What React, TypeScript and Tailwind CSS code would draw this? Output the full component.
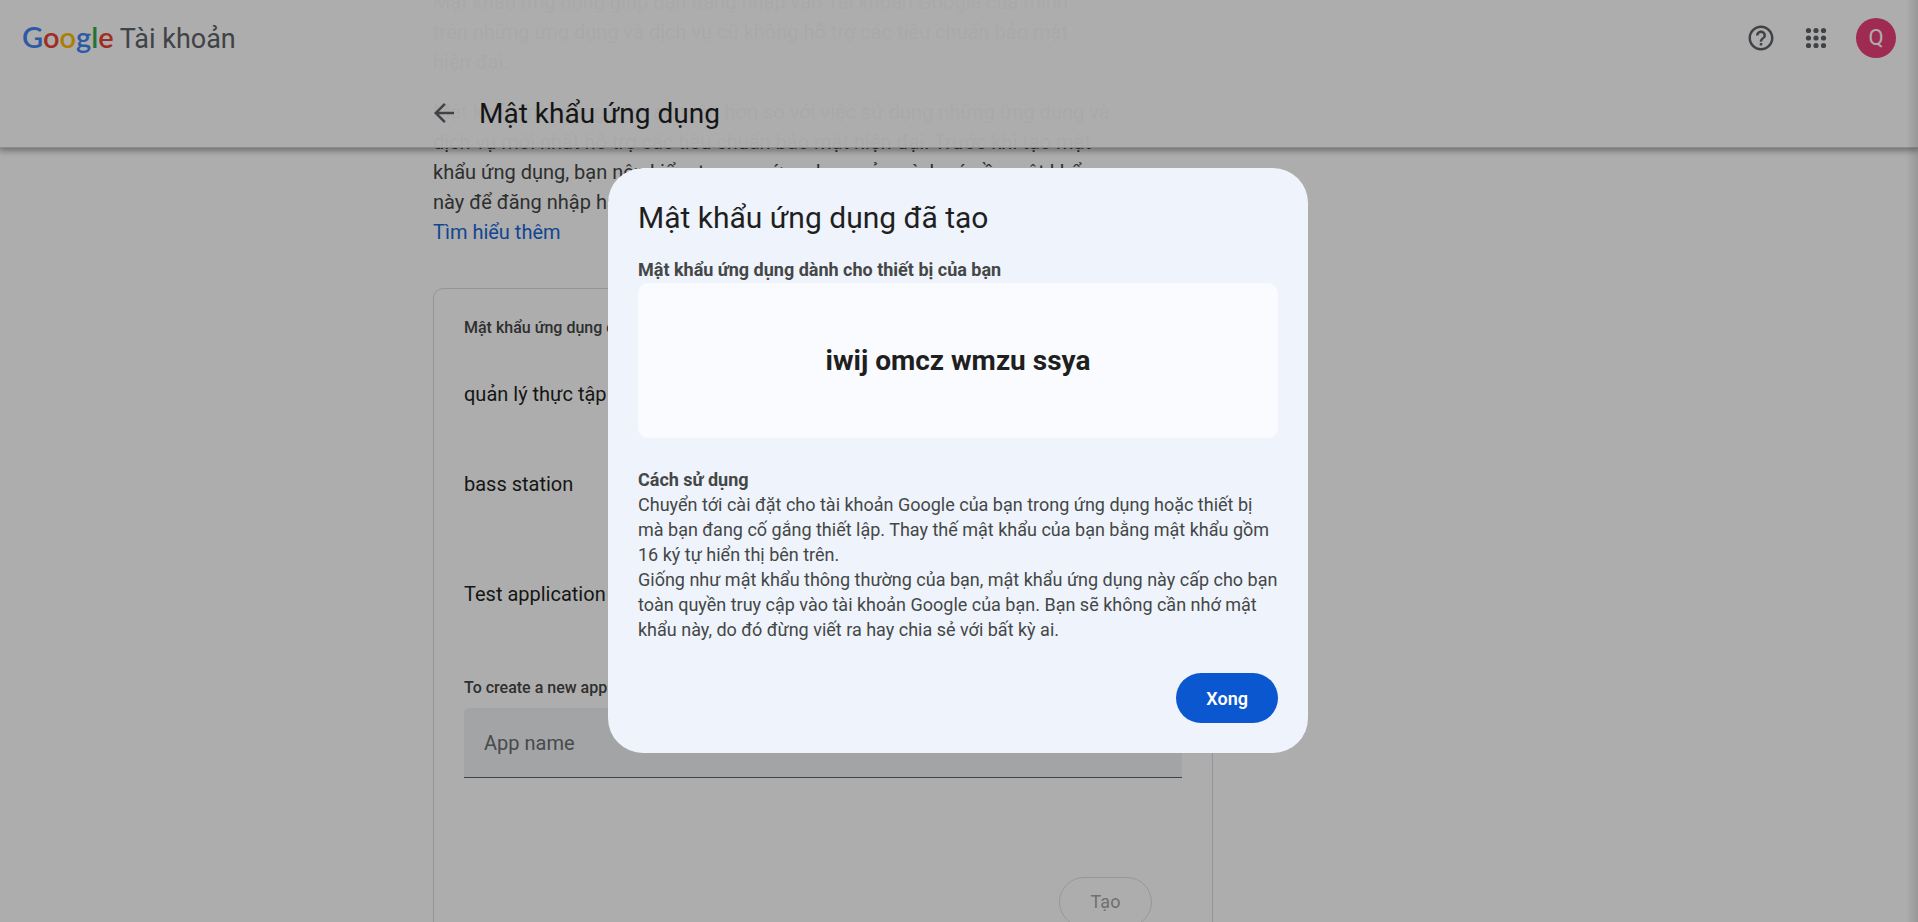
import React from 'react';
import { MdArrowBack, MdHelpOutline } from 'react-icons/md';

function AppsIcon() {
  const steps = [7.5, 15, 22.5];
  return (
    <svg viewBox="0 0 30 30" className="size-[30px]" fill="currentColor" aria-hidden="true">
      {steps.map((cy) => steps.map((cx) => <circle key={`${cx}-${cy}`} cx={cx} cy={cy} r="2.6" />))}
    </svg>
  );
}

function Header() {
  return (
    <header className="absolute inset-x-0 top-0 z-10 border-b border-[#d0d0d0] bg-white/97 shadow-[0_2px_6px_1px_rgba(0,0,0,0.35)]">
      <div className="flex h-[76px] items-center justify-between px-[22px]">
        <a href="#" className="flex items-baseline gap-1.5">
          <span className="font-['Lato',sans-serif] text-[29px] leading-10 font-semibold">
            <span className="text-[#4285f4]">G</span>
            <span className="text-[#ea4335]">o</span>
            <span className="text-[#fbbc05]">o</span>
            <span className="text-[#4285f4]">g</span>
            <span className="text-[#34a853]">l</span>
            <span className="text-[#ea4335]">e</span>
          </span>
          <span className="text-[27px] leading-10 text-[#5f6368]">Tài khoản</span>
        </a>
        <div className="flex items-center text-[#5f6368]">
          <button type="button" aria-label="Trợ giúp" className="mr-[25px]">
            <MdHelpOutline className="size-[30px]" />
          </button>
          <button type="button" aria-label="Các ứng dụng của Google" className="mr-[25px]">
            <AppsIcon />
          </button>
          <button
            type="button"
            aria-label="Tài khoản Google"
            className="size-10 rounded-full bg-[#ec407a] text-[22px] leading-10 text-white"
          >
            Q
          </button>
        </div>
      </div>
      <div className="flex h-[71px] items-start gap-5 pt-[18px] pl-[429px]">
        <button type="button" aria-label="Quay lại" className="mt-1 text-[#5f6368]">
          <MdArrowBack className="size-[30px]" />
        </button>
        <h1 className="text-[28px] leading-10 text-[#1f1f1f]">Mật khẩu ứng dụng</h1>
      </div>
    </header>
  );
}

const apps = [
  { name: 'quản lý thực tập', height: 'h-[90px]' },
  { name: 'bass station', height: 'h-[90px]' },
  { name: 'Test application', height: 'h-[130px]' },
];

function Content() {
  return (
    <main className="-mt-[13px] ml-[433px] w-[780px] max-w-full">
      <div className="text-xl leading-[30px] whitespace-nowrap text-[#444746]">
        <p className="mb-5">
          Mật khẩu ứng dụng giúp bạn đăng nhập vào Tài khoản Google của mình
          <br />
          trên những ứng dụng và dịch vụ cũ không hỗ trợ các tiêu chuẩn bảo mật
          <br />
          hiện đại.
        </p>
        <p>
          Mật khẩu ứng dụng kém an toàn hơn so với việc sử dụng những ứng dụng và
          <br />
          dịch vụ mới nhất hỗ trợ các tiêu chuẩn bảo mật hiện đại. Trước khi tạo mật
          <br />
          khẩu ứng dụng, bạn nên kiểm tra xem ứng dụng của mình có cần mật khẩu
          <br />
          này để đăng nhập hay không.
          <br />
          <a href="#" className="text-[#1a67d8]">
            Tìm hiểu thêm
          </a>
        </p>
      </div>

      <section className="mt-[41px] h-[720px] rounded-[10px] border border-[#dadce0] px-[30px] pt-[27px]">
        <h2 className="mb-[9px] text-base font-medium text-[#444746]">Mật khẩu ứng dụng của bạn</h2>
        <ul>
          {apps.map((app) => (
            <li key={app.name} className={`flex items-center text-xl text-[#1f1f1f] ${app.height}`}>
              {app.name}
            </li>
          ))}
        </ul>
        <form>
          <label htmlFor="app-name" className="mt-[17px] mb-2 block text-base font-medium text-[#444746]">
            To create a new app specific password, type a name for it below…
          </label>
          <input
            id="app-name"
            type="text"
            placeholder="App name"
            className="h-[70px] w-full rounded-t-[5px] border-b border-[#5f6368] bg-[#f0f2f4] px-5 text-xl placeholder:text-[#6a6d70]"
          />
          <div className="mt-[99px] flex justify-end pr-[30px]">
            <button
              type="button"
              disabled
              className="h-[50px] w-[93px] rounded-full border border-[#e0e0e0] text-lg text-[#a5a5a5]"
            >
              Tạo
            </button>
          </div>
        </form>
      </section>
    </main>
  );
}

function PasswordDialog() {
  return (
    <div
      role="dialog"
      aria-modal="true"
      aria-labelledby="dialog-title"
      className="w-[700px] rounded-[35px] bg-[#eef3fc] p-[30px] text-lg leading-[25px] text-[#444746]"
    >
      <h2 id="dialog-title" className="mb-[19px] text-3xl leading-10 text-[#1f1f1f]">
        Mật khẩu ứng dụng đã tạo
      </h2>
      <p className="mb-px font-bold">Mật khẩu ứng dụng dành cho thiết bị của bạn</p>
      <div className="flex h-[155px] items-center justify-center rounded-[10px] bg-[#f9fbff] text-[28px] font-bold text-[#1f1f1f]">
        iwij omcz wmzu ssya
      </div>
      <div className="mt-[29px] whitespace-nowrap">
        <p className="font-bold">Cách sử dụng</p>
        <p>
          Chuyển tới cài đặt cho tài khoản Google của bạn trong ứng dụng hoặc thiết bị
          <br />
          mà bạn đang cố gắng thiết lập. Thay thế mật khẩu của bạn bằng mật khẩu gồm
          <br />
          16 ký tự hiển thị bên trên.
        </p>
        <p>
          Giống như mật khẩu thông thường của bạn, mật khẩu ứng dụng này cấp cho bạn
          <br />
          toàn quyền truy cập vào tài khoản Google của bạn. Bạn sẽ không cần nhớ mật
          <br />
          khẩu này, do đó đừng viết ra hay chia sẻ với bất kỳ ai.
        </p>
      </div>
      <div className="mt-[31px] flex justify-end">
        <button type="button" className="h-[50px] rounded-full bg-[#0b57d0] px-[30px] font-semibold text-white">
          Xong
        </button>
      </div>
    </div>
  );
}

export default function App() {
  return (
    <div className="relative h-screen overflow-hidden bg-white font-['Roboto',sans-serif]">
      <Header />
      <div className="flow-root h-full overflow-hidden">
        <Content />
      </div>
      <div className="absolute inset-y-0 right-0 z-20 w-3 bg-linear-to-r from-transparent to-black/12" />
      <div className="absolute inset-0 z-30 flex items-center justify-center bg-black/32 pr-0.5 pb-px">
        <PasswordDialog />
      </div>
    </div>
  );
}
